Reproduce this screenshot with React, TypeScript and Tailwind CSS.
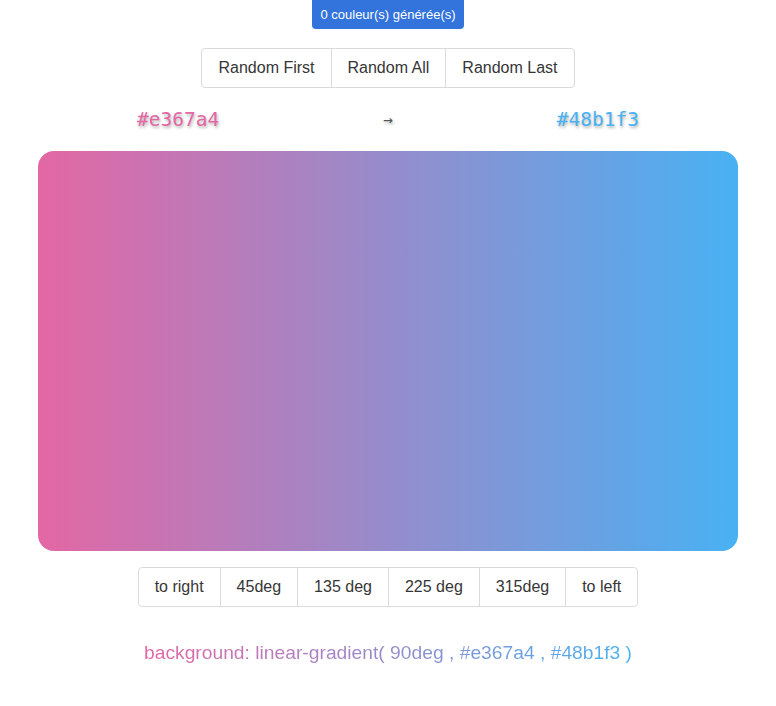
import React, { useState } from 'react';

const directions = [
  { label: 'to right', value: '90deg' },
  { label: '45deg', value: '45deg' },
  { label: '135 deg', value: '135deg' },
  { label: '225 deg', value: '225deg' },
  { label: '315deg', value: '315deg' },
  { label: 'to left', value: '270deg' },
];

export default function App() {
  const [first] = useState('#e367a4');
  const [last] = useState('#48b1f3');
  const [angle, setAngle] = useState('90deg');
  const [count] = useState(0);

  const gradient = `linear-gradient(${angle}, ${first}, ${last})`;

  return (
    <div className="min-h-[706px] bg-white font-['Liberation_Sans',Arial,sans-serif] flex flex-col items-center">
      <div className="h-[29px] px-[8px] flex items-center bg-[#3273dc] text-white text-[13px] rounded-b-[4px]">
        {count} couleur(s) générée(s)
      </div>

      <div className="mt-[19px] flex border border-[#dbdbdb] rounded-[4px] text-[16px] text-[#363636]">
        <button className="h-[38px] px-[16px]">Random First</button>
        <button className="h-[38px] px-[16px] border-l border-[#dbdbdb]">Random All</button>
        <button className="h-[38px] px-[16px] border-l border-[#dbdbdb]">Random Last</button>
      </div>

      <div className="mt-[19px] h-[26px] flex items-center justify-center gap-[164px] font-['DejaVu_Sans_Mono',monospace] [text-shadow:1px_2px_3px_rgba(0,0,0,0.3)]">
        <span className="text-[19.5px]" style={{ color: first }}>{first}</span>
        <span className="text-[16px] text-[#555]">→</span>
        <span className="text-[19.5px]" style={{ color: last }}>{last}</span>
      </div>

      <div className="mt-[18px] w-[700px] h-[400px] rounded-[16px]" style={{ background: gradient }} />

      <div className="mt-[16px] flex border border-[#dbdbdb] rounded-[4px] text-[16px] text-[#363636]">
        {directions.map((d, i) => (
          <button
            key={d.label}
            onClick={() => setAngle(d.value)}
            className={i === 0 ? 'h-[38px] px-[16px]' : 'h-[38px] px-[16px] border-l border-[#dbdbdb]'}
          >
            {d.label}
          </button>
        ))}
      </div>

      <div
        className="mt-[32px] text-[19.25px] bg-clip-text text-transparent"
        style={{ backgroundImage: `linear-gradient(90deg, ${first}, ${last})` }}
      >
        background: linear-gradient( {angle} , {first} , {last} )
      </div>
    </div>
  );
}
